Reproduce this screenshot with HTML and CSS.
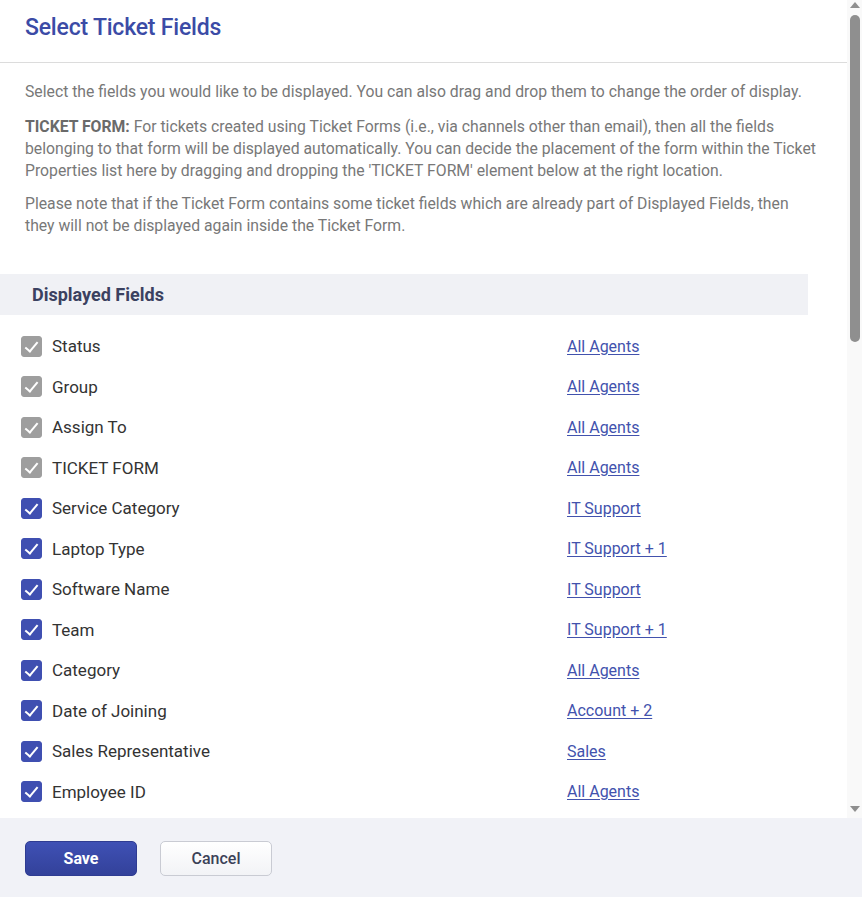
FILE: index.html
```html
<!DOCTYPE html>
<html lang="en">
<head>
<meta charset="utf-8">
<title>Select Ticket Fields</title>
<link rel="stylesheet" href="styles.css">
</head>
<body>
<div class="dialog">
  <div class="main">
    <div class="scroll">
      <div class="head">
        <h1 class="title">Select Ticket Fields</h1>
      </div>
      <div class="intro">
        <p class="p-first">Select the fields you would like to be displayed. You can also drag and drop them to change the order of display.</p>
        <p class="p-form"><b>TICKET FORM:</b> For tickets created using Ticket Forms (i.e., via channels other than email), then all the fields belonging to that form will be displayed automatically. You can decide the placement of the form within the Ticket Properties list here by dragging and dropping the 'TICKET FORM' element below at the right location.</p>
        <p>Please note that if the Ticket Form contains some ticket fields which are already part of Displayed Fields, then they will not be displayed again inside the Ticket Form.</p>
      </div>
      <div class="section-head">Displayed Fields</div>
      <ul class="fields">
        <li class="row"><span class="cb cb-locked"></span><span class="label">Status</span><a class="link" href="#">All Agents</a></li>
        <li class="row"><span class="cb cb-locked"></span><span class="label">Group</span><a class="link" href="#">All Agents</a></li>
        <li class="row"><span class="cb cb-locked"></span><span class="label">Assign To</span><a class="link" href="#">All Agents</a></li>
        <li class="row"><span class="cb cb-locked"></span><span class="label">TICKET FORM</span><a class="link" href="#">All Agents</a></li>
        <li class="row"><span class="cb cb-on"></span><span class="label">Service Category</span><a class="link" href="#">IT Support</a></li>
        <li class="row"><span class="cb cb-on"></span><span class="label">Laptop Type</span><a class="link" href="#">IT Support + 1</a></li>
        <li class="row"><span class="cb cb-on"></span><span class="label">Software Name</span><a class="link" href="#">IT Support</a></li>
        <li class="row"><span class="cb cb-on"></span><span class="label">Team</span><a class="link" href="#">IT Support + 1</a></li>
        <li class="row"><span class="cb cb-on"></span><span class="label">Category</span><a class="link" href="#">All Agents</a></li>
        <li class="row"><span class="cb cb-on"></span><span class="label">Date of Joining</span><a class="link" href="#">Account + 2</a></li>
        <li class="row"><span class="cb cb-on"></span><span class="label">Sales Representative</span><a class="link" href="#">Sales</a></li>
        <li class="row"><span class="cb cb-on"></span><span class="label">Employee ID</span><a class="link" href="#">All Agents</a></li>
      </ul>
    </div>
    <div class="scrollbar" aria-hidden="true">
      <span class="arrow arrow-up"></span>
      <span class="thumb"></span>
      <span class="track-rest"></span>
      <span class="arrow arrow-down"></span>
    </div>
  </div>
  <div class="footer">
    <button class="btn btn-primary" type="button">Save</button>
    <button class="btn btn-secondary" type="button">Cancel</button>
  </div>
</div>
</body>
</html>
```
FILE: styles.css
```css
html, body {
  margin: 0;
  padding: 0;
  background: #ffffff;
}
body {
  font-family: Roboto, "Noto Sans", "Liberation Sans", sans-serif;
  color: #333333;
}
.dialog {
  height: 897px;
  display: flex;
  flex-direction: column;
}
.main {
  height: 818px;
  flex: none;
  display: flex;
}
.scroll {
  flex: 1;
  min-width: 0;
  overflow: hidden;
  background: #ffffff;
}
.head {
  height: 62px;
  border-bottom: 1px solid #dcdcdc;
  padding: 0 25px;
  display: flex;
  align-items: center;
}
.title {
  margin: 0;
  font-size: 23px;
  font-weight: 500;
  color: #3b4ba6;
  letter-spacing: -0.2px;
  position: relative;
  top: -4px;
}
.intro {
  padding: 18px 25px 0 25px;
  margin-bottom: 37px;
}
.intro p {
  margin: 0;
  font-size: 15.75px;
  line-height: 22px;
  color: #787878;
}
.intro .p-first {
  margin-bottom: 13px;
}
.intro .p-form {
  margin-bottom: 11px;
}
.intro b {
  color: #6a6a6a;
  font-weight: 700;
}
.section-head {
  margin-right: 39px;
  height: 41px;
  background: #f0f1f5;
  padding-left: 32px;
  display: flex;
  align-items: center;
  font-size: 18px;
  font-weight: 700;
  color: #3b4160;
}
.fields {
  list-style: none;
  margin: 0;
  padding: 11px 0 10px 0;
}
.row {
  height: 40.5px;
  display: flex;
  align-items: center;
  padding-left: 21px;
}
.cb {
  width: 21px;
  height: 21px;
  border-radius: 3px;
  box-sizing: border-box;
  border: 1px solid #9a9a9a;
  background: #ffffff;
  position: relative;
  flex: none;
}
.cb-locked {
  background: #9e9e9e;
  border-color: #9e9e9e;
}
.cb-on {
  background: #3f4fb1;
  border-color: #3f4fb1;
}
.cb-locked::after,
.cb-on::after {
  content: "";
  position: absolute;
  left: 6px;
  top: 2px;
  width: 5px;
  height: 11px;
  border-right: 2px solid #ffffff;
  border-bottom: 2px solid #ffffff;
  transform: rotate(40deg);
}
.label {
  width: 525px;
  padding-left: 10px;
  box-sizing: border-box;
  font-size: 17px;
  color: #333333;
  flex: none;
}
.link {
  font-size: 16px;
  color: #4252ad;
  text-decoration: underline;
  text-underline-offset: 2px;
}
.scrollbar {
  width: 15px;
  flex: none;
  background: #f9f9f9;
  display: flex;
  flex-direction: column;
  align-items: center;
}
.arrow {
  width: 0;
  height: 0;
  border-left: 5px solid transparent;
  border-right: 5px solid transparent;
}
.arrow-up {
  margin-top: 2px;
  border-bottom: 6px solid #8f8f8f;
}
.arrow-down {
  margin-bottom: 6px;
  border-top: 6px solid #8f8f8f;
}
.thumb {
  margin-top: 7px;
  width: 10px;
  height: 327px;
  border-radius: 5px;
  background: #8f8f8f;
}
.track-rest {
  flex: 1;
}
.footer {
  height: 79px;
  flex: none;
  background: #f1f2f7;
  display: flex;
  align-items: center;
  gap: 23px;
  padding-left: 25px;
  padding-top: 1px;
  box-sizing: border-box;
}
.btn {
  width: 112px;
  height: 35px;
  border-radius: 5px;
  font-family: Roboto, "Noto Sans", "Liberation Sans", sans-serif;
  font-size: 16px;
  cursor: pointer;
}
.btn-primary {
  background: linear-gradient(#3f51b5, #33419a);
  border: 1px solid #2f3c92;
  color: #ffffff;
  font-weight: 700;
}
.btn-secondary {
  background: linear-gradient(#ffffff, #f2f3f6);
  border: 1px solid #c9cbd3;
  color: #3c4258;
  font-weight: 500;
}
```
